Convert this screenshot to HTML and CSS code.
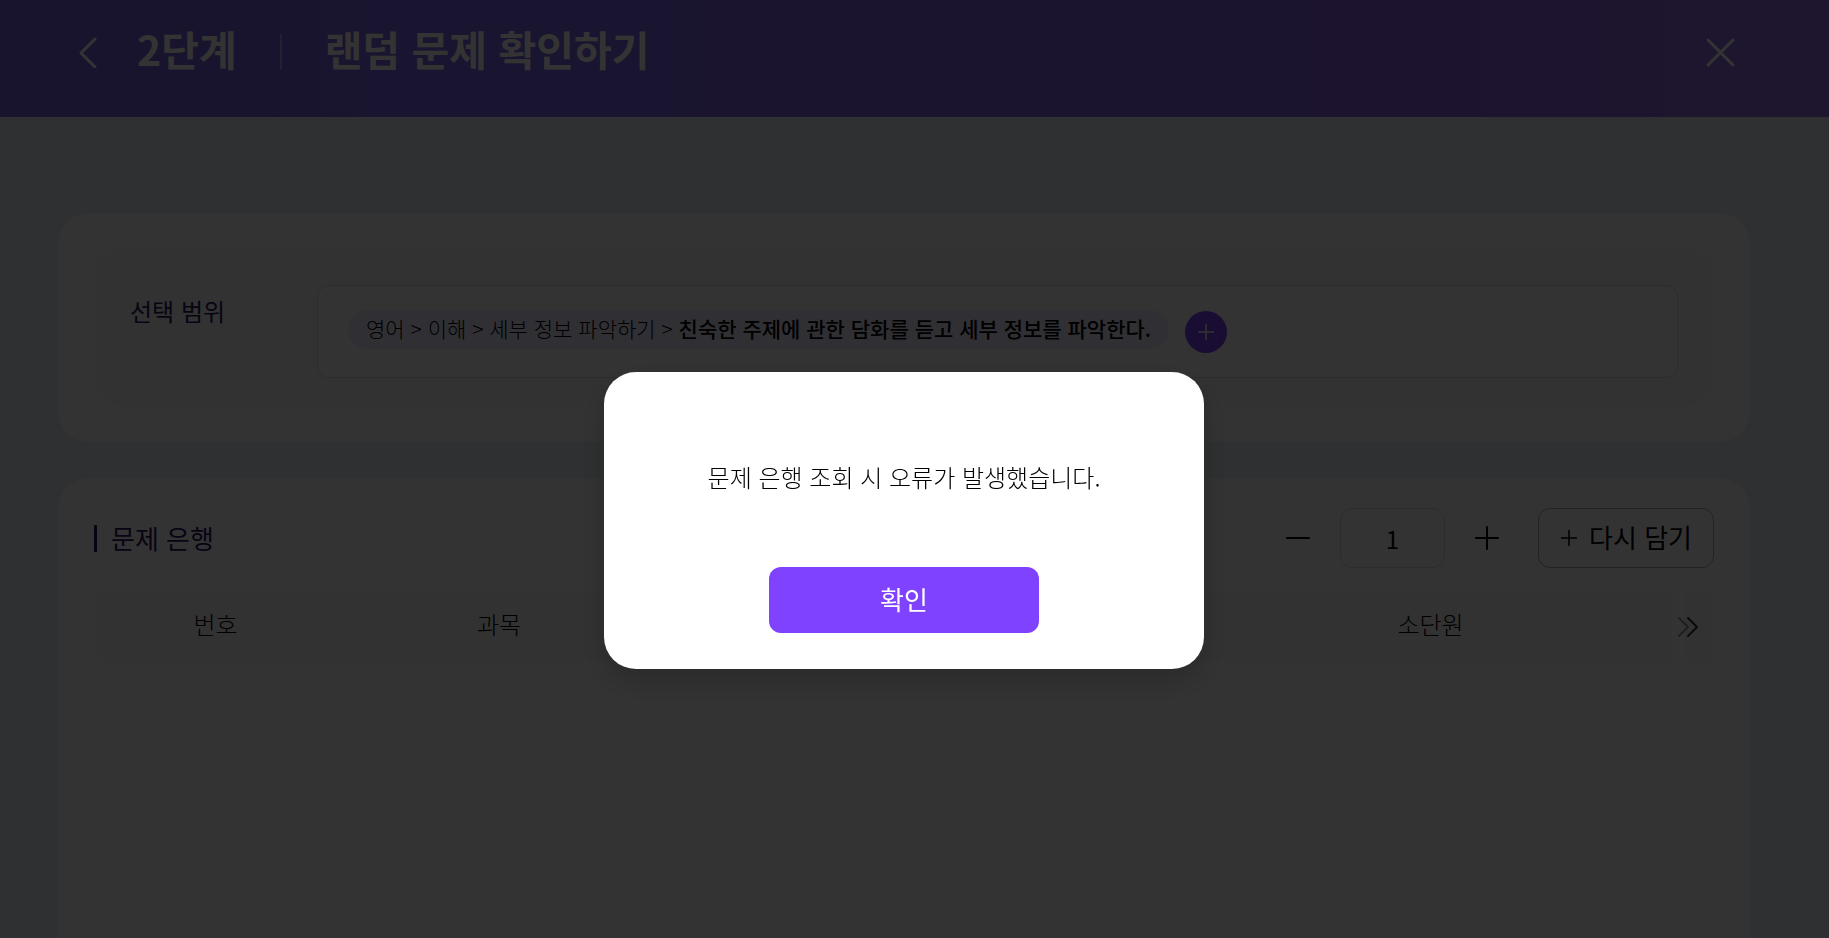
FILE: index.html
```
<!DOCTYPE html>
<html lang="ko">
<head>
<meta charset="utf-8">
<title>랜덤 문제 확인하기</title>
<link rel="stylesheet" href="styles.css">
</head>
<body>
<header class="topbar">
  <button class="icon-button" type="button" aria-label="뒤로">
    <svg class="icon-back" viewBox="0 0 18 32"><path d="M16 3 2 17l14 14"/></svg>
  </button>
  <h1 class="title"><span class="step">2단계</span><span class="name">랜덤 문제 확인하기</span></h1>
  <button class="icon-button" type="button" aria-label="닫기">
    <svg class="icon-close" viewBox="0 0 32 32"><path d="M3 4l25 25M28 4 3 29"/></svg>
  </button>
</header>
<main class="page">
  <section class="card">
    <div class="range">
      <h2 class="range-label">선택 범위</h2>
      <div class="range-box">
        <span class="chip">영어 &gt; 이해 &gt; 세부 정보 파악하기 &gt; <strong>친숙한 주제에 관한 담화를 듣고 세부 정보를 파악한다.</strong></span>
        <button class="add" type="button" aria-label="범위 추가">
          <svg class="icon-add" viewBox="0 0 16 16"><path d="M8 0v16M0 8h16"/></svg>
        </button>
      </div>
    </div>
  </section>
  <section class="card bank">
    <div class="bank-head">
      <h2 class="bank-title">문제 은행</h2>
      <div class="counter">
        <button class="icon-button" type="button" aria-label="줄이기">
          <svg class="icon-step" viewBox="0 0 24 24"><path d="M1 12h22"/></svg>
        </button>
        <input class="count" type="text" value="1" aria-label="문제 수">
        <button class="icon-button" type="button" aria-label="늘리기">
          <svg class="icon-step" viewBox="0 0 24 24"><path d="M1 12h22M12 1v22"/></svg>
        </button>
      </div>
      <button class="refill" type="button">
        <svg class="icon-refill" viewBox="0 0 16 16"><path d="M8 0v16M0 8h16"/></svg>
        <span class="refill-text">다시 담기</span>
      </button>
    </div>
    <div class="table-wrap">
      <table class="table">
        <thead>
          <tr><th class="narrow">번호</th><th class="wide">과목</th><th class="wide"></th><th class="wide"></th><th class="narrow">소단원</th><th></th></tr>
        </thead>
      </table>
      <button class="more" type="button" aria-label="오른쪽으로 이동">
        <svg class="icon-more" viewBox="0 0 22 22"><path class="faint" d="M2 2l9 9-9 9"/><path d="M11 2l9 9-9 9"/></svg>
      </button>
    </div>
  </section>
</main>
<div class="overlay">
  <div class="modal" role="alertdialog" aria-modal="true" aria-labelledby="message">
    <p class="message" id="message">문제 은행 조회 시 오류가 발생했습니다.</p>
    <button class="confirm" type="button">확인</button>
  </div>
</div>
</body>
</html>
```
FILE: styles.css
```
* { box-sizing: border-box; }

body {
  margin: 0;
  height: 100vh;
  overflow: hidden;
  display: flex;
  flex-direction: column;
  background: #ebf0f5;
  color: #000;
  font-family: "Noto Sans CJK KR", sans-serif;
  font-weight: 300;
}

button, input { font: inherit; color: inherit; }
button { border: 0; padding: 0; background: none; cursor: pointer; }
h1, h2, p { margin: 0; }
svg { display: block; fill: none; stroke: currentColor; }

.topbar {
  flex: none;
  display: flex;
  align-items: center;
  height: 117px;
  padding: 0 92px 14px 79px;
  background: linear-gradient(90deg, #7864e6, #8464ec 60%, #9869e6);
  color: #fff;
}
.icon-button { flex: none; display: flex; }
.icon-back { width: 18px; height: 32px; stroke-width: 3; stroke-linecap: round; stroke-linejoin: round; }
.icon-close { width: 32px; height: 32px; stroke-width: 3; stroke-linecap: round; }
.title {
  flex: 1;
  display: flex;
  align-items: center;
  padding: 0 0 8px 40px;
  font-size: 41px;
  font-weight: 700;
  line-height: 60px;
}
.step { display: flex; align-items: center; }
.step::after {
  content: "";
  width: 2px;
  height: 36px;
  margin: 8px 43px 0;
  background: rgba(255, 255, 255, .4);
}

.page {
  flex: 1;
  min-height: 0;
  display: flex;
  flex-direction: column;
  gap: 36px;
  padding: 96px 79px 0 58px;
}
.card { padding: 36px; border-radius: 32px; background: #fff; }

.range {
  display: flex;
  align-items: flex-start;
  padding: 36px 36px 28px;
  border-radius: 28px;
  background: #f7f7f7;
}
.range-label {
  flex: none;
  width: 187px;
  padding-top: 8px;
  color: #2d1464;
  font-size: 24px;
  font-weight: 400;
  line-height: 36px;
}
.range-box {
  flex: 1;
  display: flex;
  align-items: center;
  gap: 16px;
  padding: 24px 30px;
  border: 1px solid #ddd;
  border-radius: 12px;
  background: #fff;
}
.chip {
  margin-bottom: 4px;
  padding: 4px 18px 7px;
  border-radius: 20px;
  background: #f0ebff;
  font-size: 21px;
  line-height: 28px;
}
.chip strong { font-weight: 500; }
.add {
  display: grid;
  place-items: center;
  width: 42px;
  height: 42px;
  border-radius: 50%;
  background: #7f43ff;
  color: #fff;
}
.icon-add { width: 16px; height: 16px; stroke-width: 1.5; }

.bank { flex: 1; padding-top: 30px; border-radius: 32px 32px 0 0; }
.bank-head { display: flex; align-items: center; height: 60px; }
.bank-title {
  flex: 1;
  display: flex;
  align-items: center;
  gap: 14px;
  color: #2d1464;
  font-size: 26px;
  font-weight: 400;
  line-height: 40px;
}
.bank-title::before { content: ""; width: 3px; height: 27px; background: currentColor; }
.counter { display: flex; align-items: center; gap: 30px; }
.icon-step { width: 24px; height: 24px; stroke-width: 2; stroke-linecap: round; }
.count {
  width: 105px;
  height: 60px;
  border: 1px solid #ddd;
  border-radius: 12px;
  background: #fff;
  font-size: 24px;
  font-weight: 400;
  text-align: center;
}
.refill {
  display: flex;
  align-items: center;
  gap: 12px;
  height: 60px;
  margin-left: 39px;
  padding: 0 21px 0 22px;
  border: 1px solid #aaa;
  border-radius: 12px;
  font-size: 26px;
  font-weight: 400;
}
.refill-text { padding-bottom: 4px; }
.icon-refill { width: 16px; height: 16px; stroke-width: 1.5; }

.table-wrap {
  position: relative;
  margin-top: 24px;
  overflow: hidden;
  border-radius: 16px 0 0 16px;
}
.table {
  width: 100%;
  table-layout: fixed;
  border-collapse: collapse;
  background: #f7f7f7;
}
.table th {
  height: 70px;
  padding: 0 0 6px;
  font-size: 24px;
  font-weight: 300;
  line-height: 36px;
}
.narrow { width: 15%; }
.wide { width: 20%; }
.more {
  position: absolute;
  top: 0;
  right: 0;
  bottom: 0;
  display: flex;
  align-items: center;
  width: 53px;
  padding-left: 16px;
  background: linear-gradient(90deg, #f7f7f7, #fff 16px, #fff 24px, #f7f7f7 24px);
  color: #333;
}
.icon-more { width: 22px; height: 22px; stroke-width: 2; stroke-linecap: round; stroke-linejoin: round; }
.faint { opacity: .5; }

.overlay {
  position: fixed;
  inset: 0;
  display: grid;
  place-items: center;
  padding: 103px 21px 0 0;
  background: rgba(0, 0, 0, .8);
}
.modal {
  display: flex;
  flex-direction: column;
  align-items: center;
  gap: 72px;
  width: 600px;
  padding: 87px 36px 36px;
  border-radius: 32px;
  background: #fff;
  box-shadow: 0 12px 32px rgba(0, 0, 0, .2);
}
.message { font-size: 24px; line-height: 36px; }
.confirm {
  width: 270px;
  height: 66px;
  padding-bottom: 3px;
  border-radius: 12px;
  background: #7f43ff;
  color: #fff;
  font-size: 26px;
  font-weight: 400;
}
```
